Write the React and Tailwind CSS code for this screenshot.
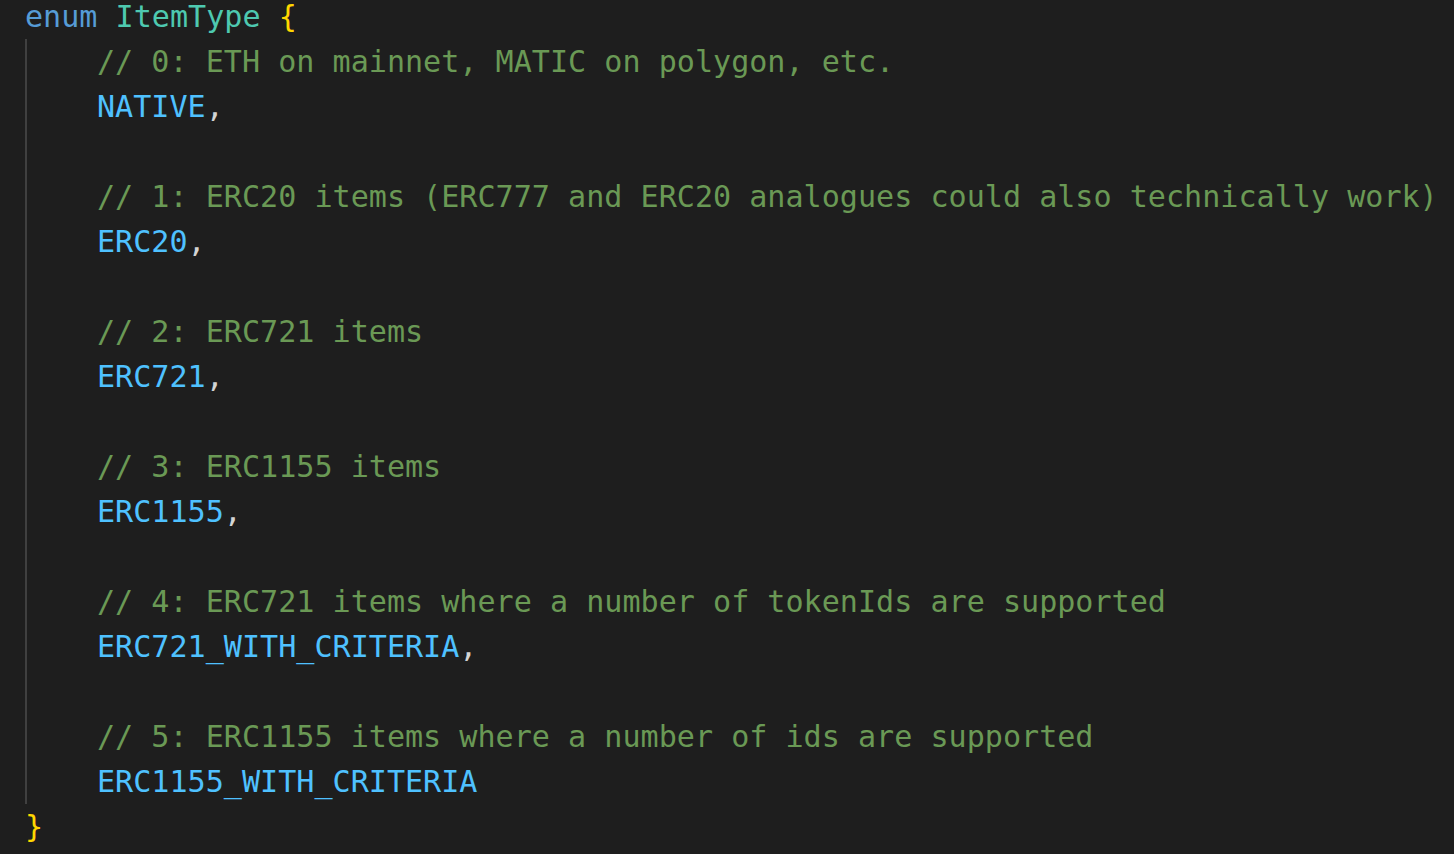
const lines = [
  { comment: "// 0: ETH on mainnet, MATIC on polygon, etc.", name: "NATIVE", comma: true },
  { comment: "// 1: ERC20 items (ERC777 and ERC20 analogues could also technically work)", name: "ERC20", comma: true },
  { comment: "// 2: ERC721 items", name: "ERC721", comma: true },
  { comment: "// 3: ERC1155 items", name: "ERC1155", comma: true },
  { comment: "// 4: ERC721 items where a number of tokenIds are supported", name: "ERC721_WITH_CRITERIA", comma: true },
  { comment: "// 5: ERC1155 items where a number of ids are supported", name: "ERC1155_WITH_CRITERIA", comma: false },
];

const App = () => {
  return (
    <div
      className="w-[1454px] h-[854px] overflow-hidden bg-[#1e1e1e] text-[30.1px] leading-[45px] whitespace-pre"
      style={{ fontFamily: '"DejaVu Sans Mono", "Liberation Mono", monospace' }}
    >
      <div className="-mt-[6px] pl-[25px]">
        <div className="h-[45px]">
          <span className="text-[#569cd6]">enum</span>{" "}
          <span className="text-[#4ec9b0]">ItemType</span>{" "}
          <span className="text-[#ffd700]">{"{"}</span>
        </div>
        <div className="ml-[0px] border-l-2 border-[#404040] pl-[70px]">
          {lines.map((line, i) => (
            <div key={line.name}>
              <div className="h-[45px] text-[#6a9955]">{line.comment}</div>
              <div className="h-[45px]">
                <span className="text-[#4fc1ff]">{line.name}</span>
                {line.comma && <span className="text-[#d4d4d4]">,</span>}
              </div>
              {i < lines.length - 1 && <div className="h-[45px]"></div>}
            </div>
          ))}
        </div>
        <div className="h-[45px] text-[#ffd700]">{"}"}</div>
      </div>
    </div>
  );
};

export default App;
